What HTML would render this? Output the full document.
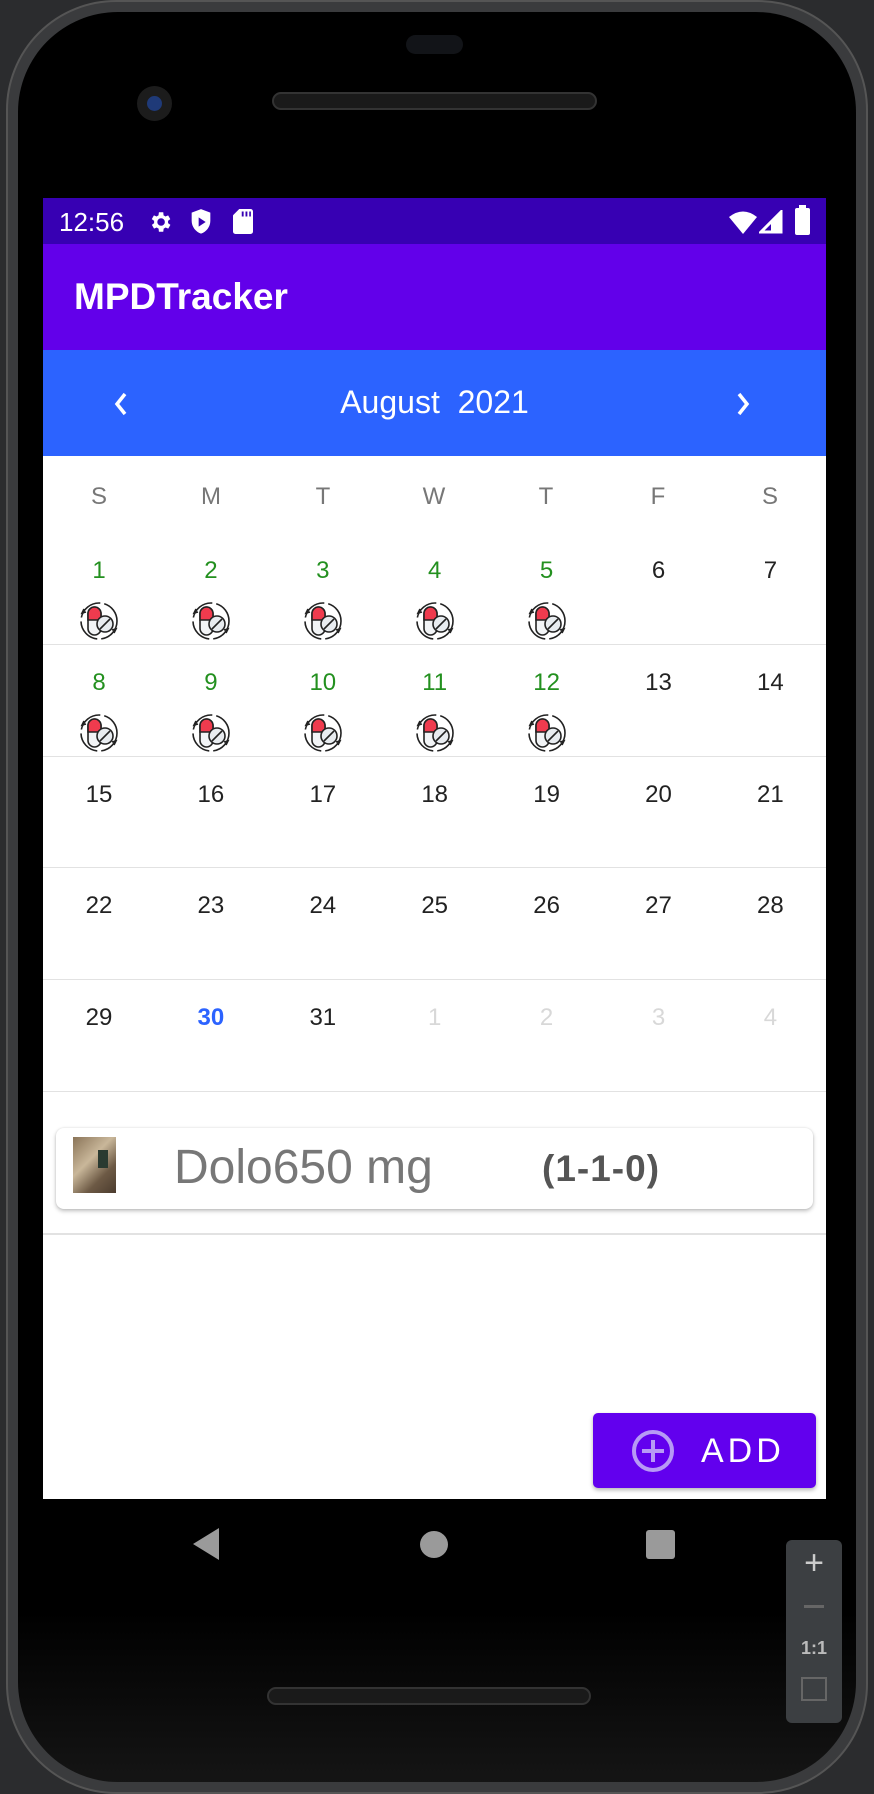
<!DOCTYPE html>
<html><head><meta charset="utf-8"><style>
*{margin:0;padding:0;box-sizing:border-box}
body{width:874px;height:1794px;background:#2b2c2e;position:relative;overflow:hidden;font-family:"Liberation Sans",sans-serif}
.abs{position:absolute}
.body{left:6px;top:0;width:862px;height:1794px;border-radius:110px;background:#3a3b3d;border:2px solid #555}
.inner{left:18px;top:12px;width:838px;height:1770px;border-radius:100px;background:linear-gradient(#000 0,#000 1600px,#161616 1780px)}
.screen{left:43px;top:198px;width:783px;height:1301px;background:#fff;overflow:hidden}
.num{position:absolute;width:112px;text-align:center;font-size:24px;color:#222}
.g{color:#23901f}
.wk{position:absolute;width:112px;text-align:center;font-size:24px;color:#777;top:285px}
.sep{position:absolute;left:0;width:783px;height:1px;background:#e2e2e2}
</style></head><body>
<div class="abs body"></div>
<div class="abs inner"></div>
<div class="abs" style="left:406px;top:35px;width:57px;height:19px;border-radius:10px;background:#121418"></div>
<div class="abs" style="left:272px;top:92px;width:325px;height:18px;border-radius:9px;background:#1a1a1a;border:2px solid #333"></div>
<div class="abs" style="left:137px;top:86px;width:35px;height:35px;border-radius:50%;background:#1c1c1c"></div>
<div class="abs" style="left:147px;top:96px;width:15px;height:15px;border-radius:50%;background:#1f3a78"></div>

<div class="abs screen">
 <div class="abs" style="left:0;top:0;width:783px;height:46px;background:#3700b3;color:#fff">
  <div class="abs" style="left:16px;top:9px;font-size:26px">12:56</div>
  <svg class="abs" style="left:104px;top:11px" width="26" height="26" viewBox="0 0 24 24"><path fill="#fff" d="M19.4 13a7.5 7.5 0 000-2l2.1-1.6-2-3.5-2.5 1a7 7 0 00-1.7-1L15 3h-4l-.4 2.9a7 7 0 00-1.7 1l-2.5-1-2 3.5L6.6 11a7.5 7.5 0 000 2l-2.1 1.6 2 3.5 2.5-1a7 7 0 001.7 1L11 21h4l.4-2.9a7 7 0 001.7-1l2.5 1 2-3.5zM13 15.5a3.5 3.5 0 110-7 3.5 3.5 0 010 7z"/></svg>
  <svg class="abs" style="left:146px;top:10px" width="24" height="28" viewBox="0 0 20 24"><path fill="#fff" d="M10 1L2 4v7c0 5 3.5 9.5 8 11 4.5-1.5 8-6 8-11V4z"/><path fill="#3700b3" d="M8 8v8l6-4z"/></svg>
  <svg class="abs" style="left:190px;top:11px" width="20" height="25" viewBox="0 0 16 20"><path fill="#fff" d="M5 0h9a2 2 0 012 2v16a2 2 0 01-2 2H2a2 2 0 01-2-2V5z"/><path fill="#3700b3" d="M7 2h1.5v4H7zM10 2h1.5v4H10zM13 2h1.3v4H13z"/></svg>
  <svg class="abs" style="left:686px;top:12px" width="28" height="24" viewBox="0 0 28 24"><path fill="#fff" d="M0 7Q14-4 28 7L14 24z"/></svg>
  <svg class="abs" style="left:716px;top:12px" width="24" height="24" viewBox="0 0 24 24"><path fill="none" stroke="#fff" stroke-width="3" d="M22 2V22H2z"/><path fill="#fff" d="M22 2V22H12V12z"/></svg>
  <div class="abs" style="left:752px;top:10px;width:15px;height:27px;background:#fff;border-radius:2px"></div>
  <div class="abs" style="left:756px;top:7px;width:7px;height:4px;background:#fff"></div>
 </div>
 <div class="abs" style="left:0;top:46px;width:783px;height:106px;background:#6200ea;color:#fff">
  <div class="abs" style="left:31px;top:32px;font-size:37px;font-weight:bold">MPDTracker</div>
 </div>
 <div class="abs" style="left:0;top:152px;width:783px;height:106px;background:#2c63ff;color:#fff">
  <svg class="abs" style="left:70px;top:42px" width="16" height="24" viewBox="0 0 16 24"><path d="M12 2L4 12l8 10" stroke="#fff" stroke-width="3.5" fill="none"/></svg>
  <svg class="abs" style="left:692px;top:42px" width="16" height="24" viewBox="0 0 16 24"><path d="M4 2l8 10-8 10" stroke="#fff" stroke-width="3.5" fill="none"/></svg>
  <div class="abs" style="left:0;top:34px;width:783px;text-align:center;font-size:32px;white-space:pre">August  2021</div>
 </div>
 <div class="wk" style="left:0;top:285px">S</div><div class="wk" style="left:112px">M</div><div class="wk" style="left:224px">T</div><div class="wk" style="left:335px">W</div><div class="wk" style="left:447px">T</div><div class="wk" style="left:559px">F</div><div class="wk" style="left:671px">S</div>
 <div id="cal"></div>
 <div class="sep" style="top:446px"></div><div class="sep" style="top:558px"></div><div class="sep" style="top:669px"></div><div class="sep" style="top:781px"></div><div class="sep" style="top:893px"></div>

 <div class="abs" style="left:13px;top:930px;width:757px;height:81px;border-radius:8px;background:#fff;box-shadow:0 2px 4px rgba(0,0,0,.25),0 0 2px rgba(0,0,0,.1)">
  <div class="abs" style="left:17px;top:9px;width:43px;height:56px;background:linear-gradient(135deg,#8a7458,#c9b79a 40%,#6d5a45 70%,#4b3b2e)"></div>
  <div class="abs" style="left:42px;top:22px;width:10px;height:18px;background:#2a3a30"></div>
  <div class="abs" style="left:118px;top:12px;font-size:48px;color:#777">Dolo650 mg</div>
  <div class="abs" style="left:486px;top:20px;font-size:37px;color:#555;font-weight:bold;letter-spacing:1px">(1-1-0)</div>
 </div>
 <div class="sep" style="top:1035px;height:2px"></div>
 <div class="abs" style="left:550px;top:1215px;width:223px;height:75px;border-radius:5px;background:#6200ee;box-shadow:0 2px 4px rgba(0,0,0,.3);color:#fff">
  <svg class="abs" style="left:38px;top:16px" width="44" height="44" viewBox="0 0 44 44"><circle cx="22" cy="22" r="19" fill="none" stroke="#b79af5" stroke-width="4"/><path d="M22 11v22M11 22h22" stroke="#b79af5" stroke-width="4"/></svg>
  <div class="abs" style="left:108px;top:19px;font-size:34px;letter-spacing:4px">ADD</div>
 </div>
</div>

<svg class="abs" style="left:193px;top:1528px" width="28" height="32" viewBox="0 0 28 32"><path d="M26 0V32L0 16z" fill="#9a9a9a"/></svg>
<div class="abs" style="left:420px;top:1531px;width:28px;height:27px;border-radius:50%;background:#9a9a9a"></div>
<div class="abs" style="left:646px;top:1530px;width:29px;height:29px;border-radius:3px;background:#9a9a9a"></div>
<div class="abs" style="left:267px;top:1687px;width:324px;height:18px;border-radius:9px;background:#1a1a1a;border:2px solid #333"></div>
<div class="abs" style="left:786px;top:1540px;width:56px;height:183px;border-radius:6px;background:#3c3f42;color:#bbb;text-align:center">
 <div style="font-size:34px;margin-top:4px;color:#ccc">+</div>
 <div style="width:20px;height:3px;background:#666;margin:22px auto 0"></div>
 <div style="font-size:18px;font-weight:bold;margin-top:30px">1:1</div>
 <div style="width:26px;height:24px;border:2px solid #666;margin:18px auto 0"></div>
</div>

<script>
var pill='<svg width="40" height="40" viewBox="0 0 40 40"><circle cx="20" cy="20" r="18" fill="none" stroke="#222" stroke-width="1.6" stroke-dasharray="26 4"/><path d="M5 8l-2 4 4-1M35 32l2-4-4 1" stroke="#222" stroke-width="1.6" fill="none"/><rect x="9" y="6" width="13" height="28" rx="6.5" fill="#f2f4f6" stroke="#222" stroke-width="1.6"/><path d="M9 19v-6.5a6.5 6.5 0 0113 0V19z" fill="#ef3b4e" stroke="#222" stroke-width="1.6"/><circle cx="26" cy="23" r="8" fill="#e8ecf0" stroke="#222" stroke-width="1.6"/><path d="M21 28l10-10" stroke="#222" stroke-width="1.6"/></svg>';
var h='',tops=[334,446,558,669,781];
for(var r=0;r<5;r++)for(var c=0;c<7;c++){var d=r*7+c+1,txt=d,cls='num',st='';
if(d>31){txt=d-31;st='color:#d8d8d8'}
if(d==30)st='color:#2c63ff;font-weight:bold';
var green=(r<2&&c<5);if(green)cls+=' g';
h+='<div class="'+cls+'" style="left:'+(c*111.9)+'px;top:'+(tops[r]+25)+'px;'+st+'">'+txt+'</div>';
if(green)h+='<div class="abs" style="left:'+(c*111.9+36)+'px;top:'+(tops[r]+69)+'px">'+pill+'</div>';}
document.getElementById('cal').innerHTML=h;
</script>
</body></html>
